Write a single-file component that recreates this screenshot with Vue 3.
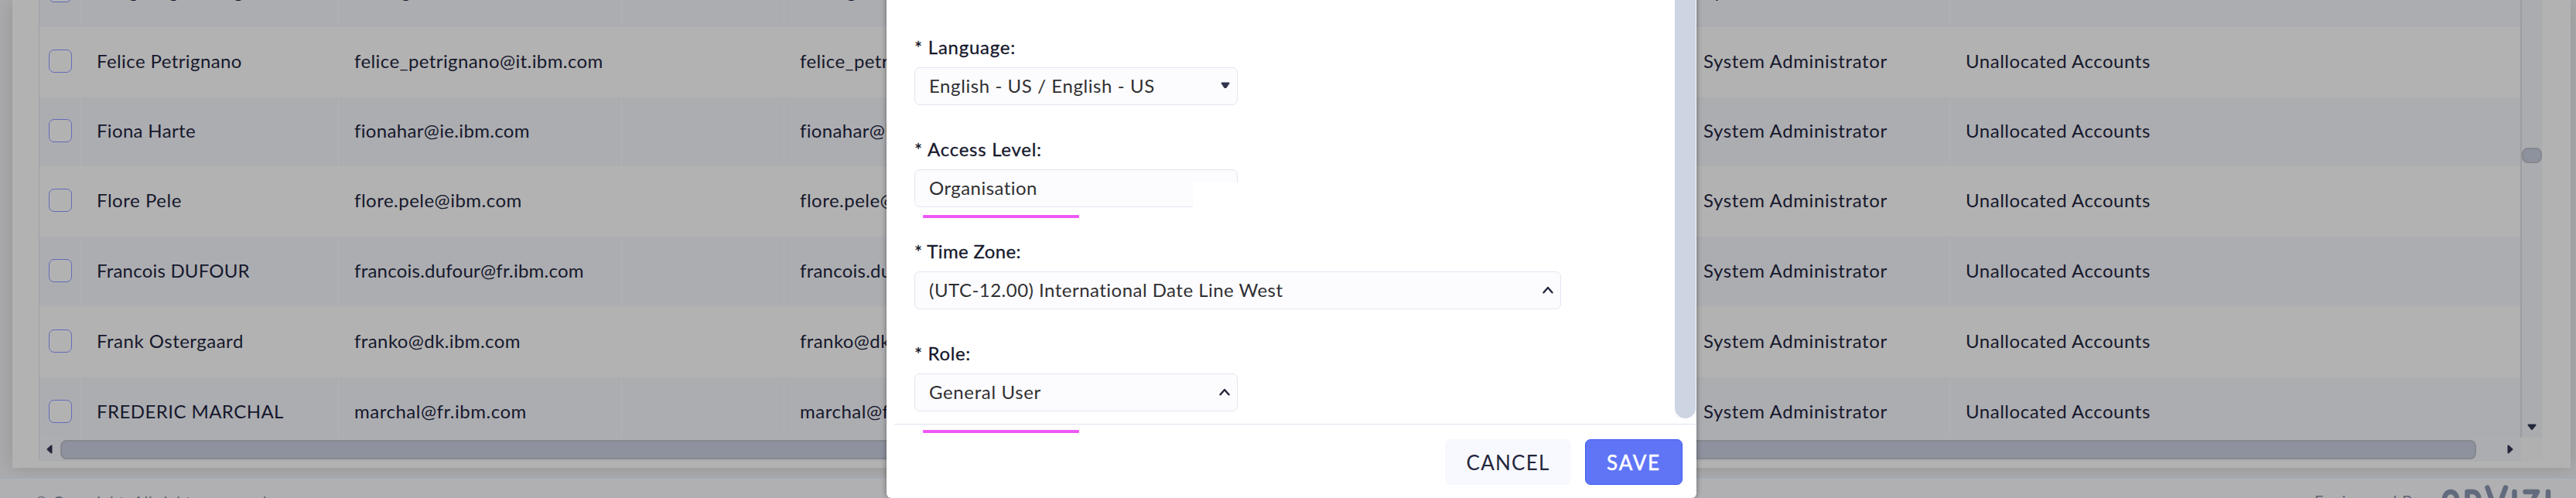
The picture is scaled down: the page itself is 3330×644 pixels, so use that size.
<script setup>
// Spreads a text over a given width by adjusting its tracking.
const vFit = {
  mounted(el, { value }) {
    if (!value) return
    el.style.letterSpacing = '0.01px'
    const natural = el.getBoundingClientRect().width
    el.style.letterSpacing = ((value - natural) / el.textContent.length).toFixed(3) + 'px'
  },
}

const users = [
  { name: 'Fangfang Huang', nw: 191, mail: 'fanfangh@cn.ibm.com', mw: 212, h: 91 },
  { name: 'Felice Petrignano', nw: 188, mail: 'felice_petrignano@it.ibm.com', mw: 322, h: 91 },
  { name: 'Fiona Harte', nw: 128, mail: 'fionahar@ie.ibm.com', mw: 227, h: 89 },
  { name: 'Flore Pele', nw: 110, mail: 'flore.pele@ibm.com', mw: 217, h: 91 },
  { name: 'Francois DUFOUR', nw: 198, mail: 'francois.dufour@fr.ibm.com', mw: 297, h: 90 },
  { name: 'Frank Ostergaard', nw: 190, mail: 'franko@dk.ibm.com', mw: 215, h: 92 },
  { name: 'FREDERIC MARCHAL', nw: 242, mail: 'marchal@fr.ibm.com', mw: 223, h: 90 },
]

const fields = [
  { label: '* Language:', lw: 131, text: 'English - US / English - US', tw: 292, icon: 'caret' },
  { label: '* Access Level:', lw: 165, text: 'Organisation', tw: 140, masked: true, marked: true },
  { label: '* Time Zone:', lw: 138, text: '(UTC-12.00) International Date Line West', tw: 458, icon: 'chevron', wide: true },
  { label: '* Role:', lw: 73, text: 'General User', tw: 145, icon: 'chevron', marked: true, low: true },
]
</script>

<template>
  <div class="page">
    <main class="card">
      <div class="grid">
        <div class="body">
          <div class="rows">
            <div v-for="(u, i) in users" :key="u.name" class="row" :class="{ alt: i % 2 === 0 }" :style="{ height: u.h + 'px' }">
              <div class="cell check"><span class="box"></span></div>
              <div class="cell name"><span v-fit="u.nw">{{ u.name }}</span></div>
              <div class="cell mail"><span v-fit="u.mw">{{ u.mail }}</span></div>
              <div class="cell gap"></div>
              <div class="cell login"><span v-fit="u.mw">{{ u.mail }}</span></div>
              <div class="cell role"><span v-fit="238">System Administrator</span></div>
              <div class="cell group"><span v-fit="239">Unallocated Accounts</span></div>
            </div>
          </div>
          <div class="vbar">
            <span class="vthumb"></span>
            <svg class="down" width="12" height="9" viewBox="0 0 12 9"><path d="M1.5 1.5h9L6 7z" /></svg>
          </div>
        </div>
        <div class="foot">
          <div class="hbar">
            <svg width="8" height="12" viewBox="0 0 8 12"><path d="M6.5 1.5v9L1.5 6z" /></svg>
            <span class="hthumb"></span>
            <svg class="right" width="8" height="12" viewBox="0 0 8 12"><path d="M1.5 1.5v9L6.5 6z" /></svg>
          </div>
          <div class="corner"></div>
        </div>
      </div>
    </main>
    <footer class="footer">
      <div class="copy"><span v-fit="306">© Copyright. All rights reserved.</span></div>
      <div class="brand">
        <div class="eng"><span v-fit="138">Engineered By</span></div>
        <svg class="logo" width="144" height="60" viewBox="0 0 144 60">
          <path d="M5 34V26a8 9 0 0 1 16 0V34M34.500 44V17h7a8 9 0 0 1 8 9v18M60.500 11.500L72 44L84 11.500M95.500 17V44M109.500 17H125L110 44H125M139 17V44" />
        </svg>
      </div>
    </footer>

    <section class="modal">
      <div class="content">
        <form class="form" @submit.prevent>
          <div v-for="f in fields" :key="f.label" class="field">
            <label><span v-fit="f.lw">{{ f.label }}</span></label>
            <div class="select" :class="{ wide: f.wide }">
              <span v-fit="f.tw">{{ f.text }}</span>
              <svg v-if="f.icon === 'caret'" width="12" height="9" viewBox="0 0 12 9" class="caret"><path d="M1.500 1.500h9L6.800 7h-1.600z" /></svg>
              <svg v-if="f.icon === 'chevron'" width="14" height="10" viewBox="0 0 14 10" class="chevron"><path d="M1.500 8.300L7 2l5.500 6.300" /></svg>
              <i v-if="f.masked" class="mask"></i>
            </div>
            <i v-if="f.marked" class="mark" :class="{ low: f.low }"></i>
          </div>
        </form>
        <div class="scroll"><span></span></div>
      </div>
      <div class="actions">
        <button class="cancel"><span v-fit="108">CANCEL</span></button>
        <button class="save"><span v-fit="70">SAVE</span></button>
      </div>
    </section>
  </div>
</template>

<style>
body { margin: 0; overflow: hidden; }
</style>

<style scoped>
* { box-sizing: border-box; }
.page {
  position: relative; width: 3330px; height: 644px; overflow: hidden;
  background: #acacae; color: #16182c;
  font: 24px/30px Lato, "Open Sans", sans-serif;
}
.card {
  margin-left: 16px; width: 3307px; height: 605px; padding: 0 34px; background: #b2b2b2;
  box-shadow: 0 0 24px rgba(90, 90, 90, .3);
}
.grid { width: 3237px; height: 597px; border-left: 1px solid #9da0a5; border-radius: 0 0 0 5px; }
.body { display: flex; height: 567px; overflow: hidden; }
.rows { width: 3207px; height: 624px; margin-top: -56px; flex: none; }
.row { display: flex; background: #b2b2b2; }
.row.alt { background: #acadb1; }
.cell { display: flex; align-items: center; padding: 0 0 3px 20px; border-right: 1px solid #b1b2b5; white-space: nowrap; overflow: hidden; }
.row:not(.alt) .cell { border-color: transparent; }
.cell span { flex: none; }
.check { width: 54px; padding: 0 0 3px 12px; }
.name { width: 333px; }
.mail { width: 366px; }
.gap { width: 210px; }
.login { width: 132px; border: 0; }
.role { width: 1375px; padding-left: 1056px; }
.group { width: 737px; border: 0; }
.box { width: 30px; height: 30px; border: 1.500px solid #626cba; border-radius: 7px; background: #b2b2b2; }
.vbar { width: 28px; height: 566px; background: #abacb0; border-left: 2px solid #9c9da0; border-right: 1px solid #a8aaad; display: flex; flex-direction: column; align-items: center; justify-content: space-between; padding: 191px 0 9px; }
.vthumb { width: 26px; height: 20px; border: 2px solid #86888e; border-radius: 8px; background: #8e929e; }
svg { flex: none; display: block; }
.grid svg path { fill: #24263a; stroke: #24263a; stroke-width: 2; stroke-linejoin: round; }
.foot { display: flex; height: 30px; }
.hbar { width: 3209px; height: 29px; display: flex; align-items: center; padding: 0 10px 1px 9px; background: #acadb1; border-top: 1px solid #b0b0b2; border-bottom: 1px solid #a8aaad; border-radius: 0 0 0 5px; }
.hthumb { width: 3123px; height: 25px; margin-left: 10px; border: 2px solid #85888e; border-radius: 8px; background: #8e929e; }
.right { margin-left: auto; }
.corner { width: 28px; height: 30px; background: #b0b0b0; }
.footer {
  display: flex; justify-content: space-between; margin-top: 12px; height: 60px; padding: 0 31px 0 45px;
  background: #b0b0b2; border-top: 2px solid #a4a9b3; font-size: 20px; color: #5f6476; position: relative;
}
.copy, .eng { height: 30px; margin-top: 14px; white-space: nowrap; }
.brand { display: flex; }
.eng { width: 163px; margin-top: 13px; }
.logo path { fill: none; stroke: #626a7d; stroke-width: 6.500; stroke-linecap: round; stroke-linejoin: round; }

.modal {
  position: absolute; left: 1146px; top: -20px; width: 1047px; height: 664px; background: #fff;
  border-radius: 6px; box-shadow: 0 0 7px rgba(0, 0, 0, .42);
}
.content { display: flex; justify-content: space-between; height: 561px; }
.form { padding: 65px 0 0 36px; display: flex; flex-direction: column; }
.field { height: 132px; flex: none; position: relative; }
label { display: flex; height: 42px; line-height: 32px; -webkit-text-stroke: .3px #16182c; }
.select {
  position: relative; display: flex; align-items: center; justify-content: space-between; width: 418px; height: 49px;
  padding: 0 9px 2px 18px; border: 1.500px solid #e2e6f0; border-radius: 7px; background: #fcfcfe; color: #303032; white-space: nowrap;
}
.select.wide { width: 836px; }
.caret path { fill: #30344e; stroke: #30344e; stroke-width: 2; stroke-linejoin: round; }
.chevron path { fill: none; stroke: #24283e; stroke-width: 2.400; stroke-linecap: round; stroke-linejoin: round; }
.mask { position: absolute; left: 359px; top: 16px; width: 60px; height: 34px; background: #fff; }
.mark { position: absolute; left: 11px; top: 101px; width: 202px; height: 4px; background: #ee5af6; border-radius: 1px; z-index: 1; }
.mark.low { top: 115px; }
.scroll { width: 28px; padding-right: 1px; background: #fafbff; }
.scroll span { display: block; height: 561px; background: #cdd4e2; border-radius: 0 0 14px 14px; }
.actions { display: flex; justify-content: flex-end; gap: 18px; margin: 7px 1px 0 10px; padding: 19px 17px 0 0; border-top: 1px solid #dfe5f0; height: 96px; }
button { height: 59px; padding: 0; border: 0; border-radius: 7px; font: 26px/30px Lato, sans-serif; }
.cancel { width: 163px; background: #f8f9ff; color: #24263c; }
.save { width: 126px; background: #5f75f6; color: #fff; border: 1.500px solid #3d5cf0; -webkit-text-stroke: .5px #fff; }
</style>
